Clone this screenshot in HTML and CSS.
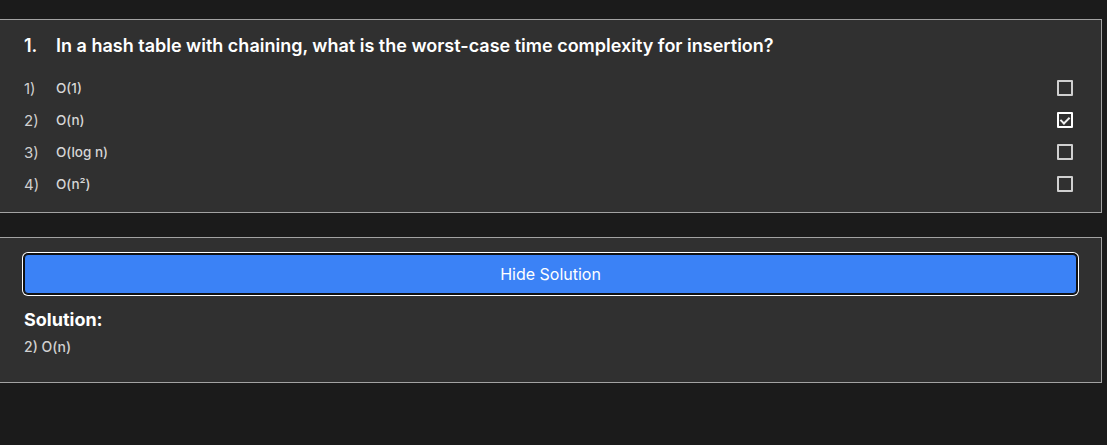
FILE: index.html
```html
<!DOCTYPE html>
<html lang="en">
<head>
<meta charset="utf-8">
<title>Quiz</title>
<link rel="stylesheet" href="styles.css">
</head>
<body>
<main class="page">
  <section class="card question-card">
    <h2 class="question"><span class="q-num">1.</span><span class="q-text">In a hash table with chaining, what is the worst-case time complexity for insertion?</span></h2>
    <ul class="options">
      <li class="option"><span class="opt-num">1)</span><span class="opt-text">O(1)</span><input class="check" type="checkbox"></li>
      <li class="option"><span class="opt-num">2)</span><span class="opt-text">O(n)</span><input class="check" type="checkbox" checked></li>
      <li class="option"><span class="opt-num">3)</span><span class="opt-text">O(log n)</span><input class="check" type="checkbox"></li>
      <li class="option"><span class="opt-num">4)</span><span class="opt-text">O(n²)</span><input class="check" type="checkbox"></li>
    </ul>
  </section>
  <section class="card solution-card">
    <button class="toggle" type="button">Hide Solution</button>
    <h3 class="sol-title">Solution:</h3>
    <p class="sol-text">2) O(n)</p>
  </section>
</main>
</body>
</html>
```
FILE: styles.css
```css
html, body {
  margin: 0;
  padding: 0;
  background: #1b1b1b;
}
body {
  font-family: Inter, "Noto Sans", sans-serif;
  color: #fff;
}
.page {
  display: flex;
  flex-direction: column;
  gap: 24px;
  width: 1103px;
  margin-left: -1px;
  padding-top: 19px;
}
.card {
  background: #303030;
  border: 1px solid #a3a3a3;
}
.question-card {
  padding: 15px 24px 17px;
}
.question {
  display: flex;
  margin: 0 0 20px;
  font-size: 18px;
  line-height: 22px;
  font-weight: 600;
  color: #fff;
}
.q-num {
  width: 32px;
  flex: none;
}
.options {
  list-style: none;
  margin: 0;
  padding: 0;
  display: flex;
  flex-direction: column;
  gap: 10px;
}
.option {
  display: flex;
  align-items: center;
  height: 22px;
  font-size: 13.5px;
  color: #d6d6d6;
}
.opt-num {
  width: 32px;
  flex: none;
  font-size: 15px;
  color: #cfcfcf;
}
.opt-text {
  flex: 1;
  font-weight: 500;
}
.check {
  appearance: none;
  -webkit-appearance: none;
  width: 16px;
  height: 16px;
  margin: 3px 4px 3px 3px;
  border: 2px solid #d0d0d0;
  border-radius: 1px;
  background: transparent;
  box-sizing: border-box;
  position: relative;
}
.check:checked {
  border-color: #fff;
}
.check:checked::after {
  content: "";
  position: absolute;
  left: 3px;
  top: 1px;
  width: 4px;
  height: 7px;
  border: solid #f2f2f2;
  border-width: 0 2px 2px 0;
  transform: rotate(45deg);
}
.solution-card {
  padding: 16px 24px 25px;
}
.toggle {
  display: block;
  width: 100%;
  height: 40px;
  background: #3b82f6;
  color: #fff;
  border: 1px solid #111;
  border-radius: 4px;
  box-shadow: 0 0 0 1px #111, 0 0 0 2px #fff;
  font-family: Inter, "Noto Sans", sans-serif;
  font-size: 16px;
  cursor: pointer;
}
.sol-title {
  margin: 15px 0 6px;
  font-size: 18px;
  line-height: 22px;
  font-weight: 700;
  color: #fff;
}
.sol-text {
  margin: 0;
  font-size: 14px;
  line-height: 20px;
  font-weight: 500;
  color: #d0d0d0;
}
```
